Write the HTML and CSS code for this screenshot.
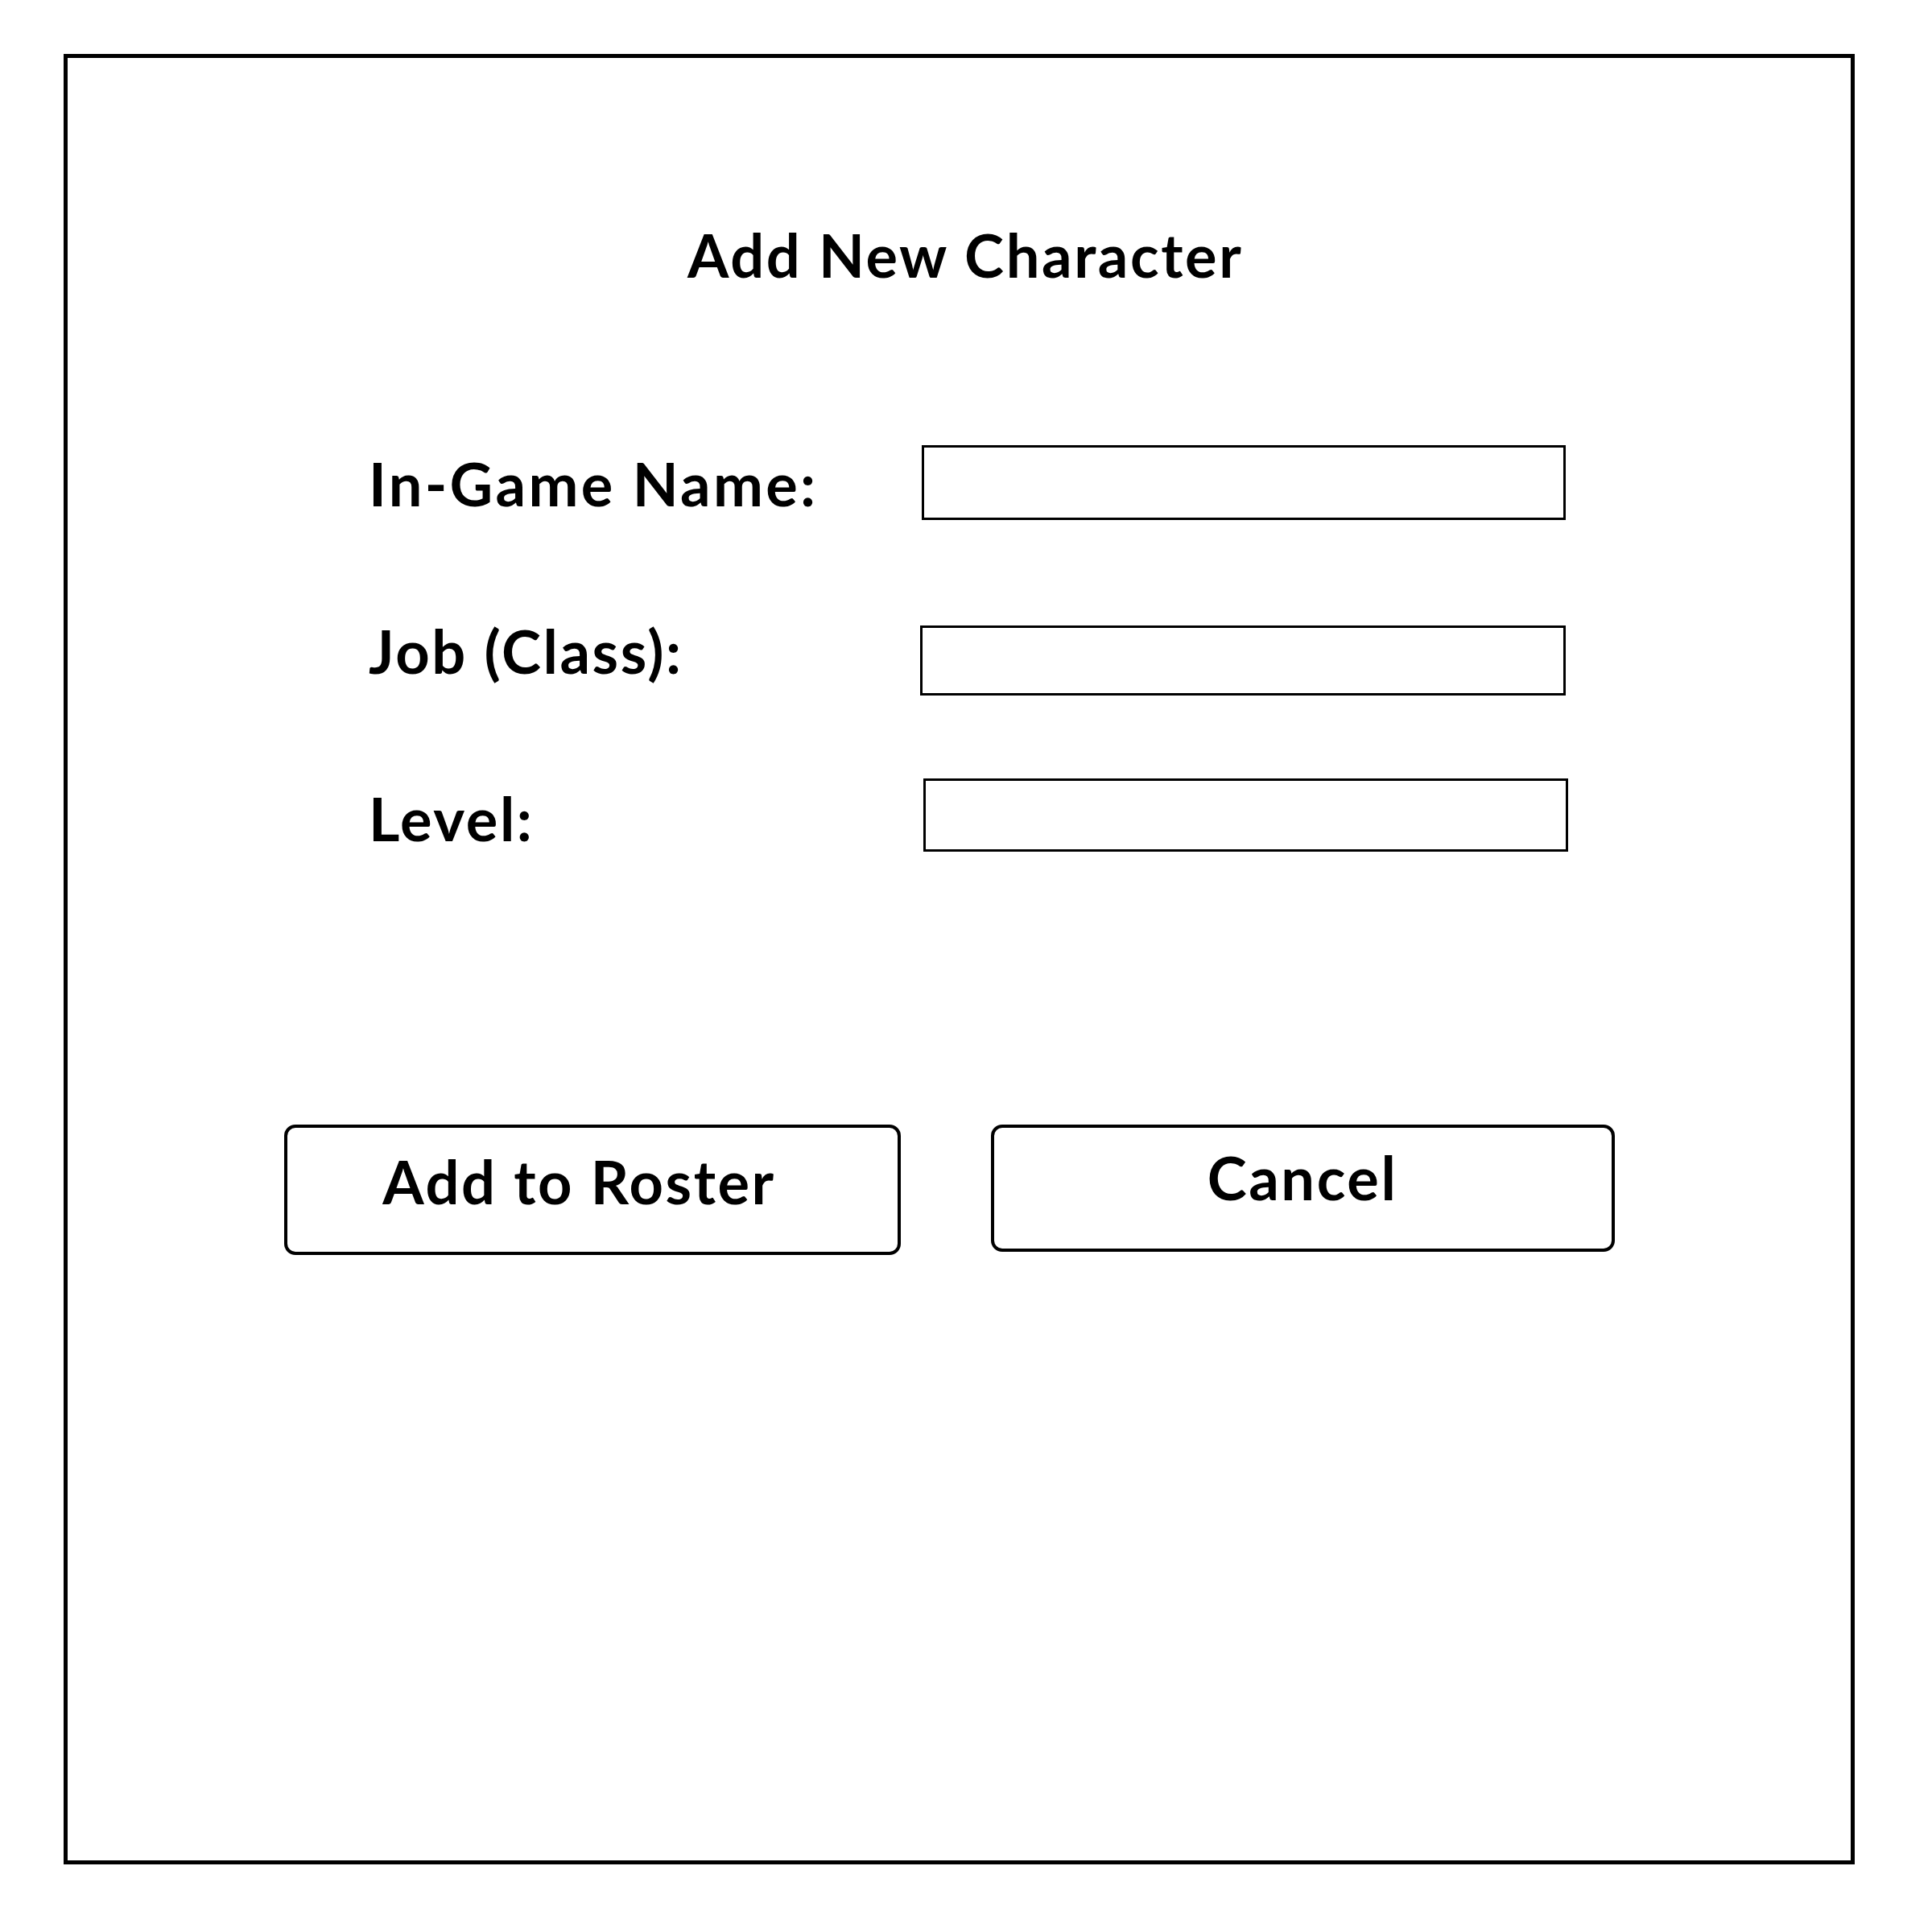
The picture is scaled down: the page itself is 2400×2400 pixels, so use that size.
FILE: index.html
```html
<!DOCTYPE html>
<html lang="en">
<head>
<meta charset="utf-8">
<title>Add New Character</title>
<link rel="stylesheet" href="styles.css">
</head>
<body>
<div class="frame">
  <h1 class="title">Add New Character</h1>
  <form class="form">
    <div class="row row1">
      <label class="label label-wide" for="ign">In-Game Name:</label>
      <input class="field" id="ign" type="text">
    </div>
    <div class="row row2">
      <label class="label" for="job">Job (Class):</label>
      <input class="field" id="job" type="text">
    </div>
    <div class="row row3">
      <label class="label" for="lvl">Level:</label>
      <input class="field" id="lvl" type="text">
    </div>
  </form>
  <div class="actions">
    <button class="btn btn-add" type="button">Add to Roster</button>
    <button class="btn btn-cancel" type="button">Cancel</button>
  </div>
</div>
</body>
</html>
```
FILE: styles.css
```css
* { box-sizing: border-box; }

body {
  margin: 0;
  background: #fff;
  color: #000;
  font-family: Lato, "Open Sans", sans-serif;
}

.frame {
  margin: 67px 0 0 79px;
  width: 2225px;
  height: 2249px;
  border: 5px solid #000;
}

.title,
.label,
.btn {
  font-family: Lato, "Open Sans", sans-serif;
  font-size: 74px;
  line-height: 74px;
  font-weight: 700;
  letter-spacing: 2.6px;
  white-space: nowrap;
}

.title {
  margin: 0;
  padding: 208px 0 0 770px;
}

.form {
  margin: 199px 0 0 0;
  padding-left: 374px;
}

.row {
  display: flex;
  align-items: flex-start;
}

.label {
  flex: none;
  width: 687px;
}

.label-wide {
  letter-spacing: 3.3px;
}

.field {
  flex: none;
  width: 800px;
  margin: 0;
  padding: 0;
  border: 3px solid #000;
  border-radius: 0;
  background: #fff;
  outline: none;
  appearance: none;
}

.row1 .label { margin-top: 11px; }
.row1 .field { height: 93px; }

.row2 { margin-top: 126px; }
.row2 .field { margin-top: 5px; margin-left: -2px; width: 802px; height: 87px; }

.row3 { margin-top: 103px; }
.row3 .label { margin-top: 13px; }
.row3 .field { margin-left: 2px; width: 801px; height: 91px; }

.actions {
  display: flex;
  align-items: flex-start;
  gap: 112px;
  margin-top: 339px;
  padding-left: 269px;
}

.btn {
  display: flex;
  justify-content: center;
  align-items: flex-start;
  margin: 0;
  padding: 0;
  border: 4px solid #000;
  border-radius: 14px;
  background: #fff;
  color: #000;
}

.btn-add {
  width: 766px;
  height: 162px;
  padding-top: 30px;
  padding-right: 33px;
}

.btn-cancel {
  width: 775px;
  height: 158px;
  padding-top: 25px;
  padding-right: 1px;
}
```
